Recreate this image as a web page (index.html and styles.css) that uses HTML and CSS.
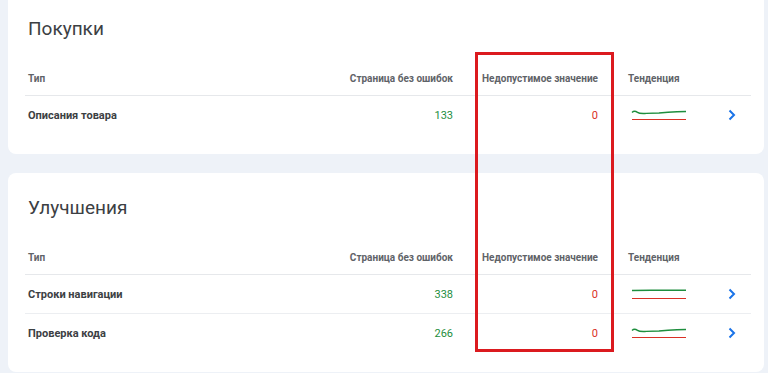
FILE: index.html
```html
<!DOCTYPE html>
<html lang="ru">
<head>
    <meta charset="UTF-8">
    <meta name="viewport" content="width=device-width, initial-scale=1.0">
    <title>Расширенные результаты</title>
    <link rel="stylesheet" href="styles.css">
</head>
<body>
    <div class="page">
        <section class="card card--clipped">
            <h2 class="card-title">Покупки</h2>
            <div class="report">
                <div class="report-row report-head">
                    <div class="cell">Тип</div>
                    <div class="cell num">Страница без ошибок</div>
                    <div class="cell num">Недопустимое значение</div>
                    <div class="cell trend">Тенденция</div>
                    <div class="cell"></div>
                </div>
                <div class="report-row">
                    <div class="cell label">Описания товара</div>
                    <div class="cell num good">133</div>
                    <div class="cell num bad">0</div>
                    <div class="cell trend">
                        <svg class="spark" width="56" height="12" viewBox="0 0 56 12">
                            <path d="M1 3.4 C2.5 2 4.5 2 6.5 3.4 C8.5 4.8 10.5 4.6 15 4.4 L28 4 C34 3.4 40 3 46 2.8 L55 2.5" stroke="#1e8e3e" stroke-width="1.4" fill="none"/>
                            <path d="M1 10.5 L55 10.5" stroke="#d93025" stroke-width="1.2"/>
                        </svg>
                    </div>
                    <div class="cell go">
                        <svg width="8" height="12" viewBox="0 0 8 12"><path d="M1.5 1.5 L6 6 L1.5 10.5" stroke="#1a73e8" stroke-width="2" fill="none"/></svg>
                    </div>
                </div>
            </div>
        </section>

        <section class="card">
            <h2 class="card-title">Улучшения</h2>
            <div class="report">
                <div class="report-row report-head">
                    <div class="cell">Тип</div>
                    <div class="cell num">Страница без ошибок</div>
                    <div class="cell num">Недопустимое значение</div>
                    <div class="cell trend">Тенденция</div>
                    <div class="cell"></div>
                </div>
                <div class="report-row">
                    <div class="cell label">Строки навигации</div>
                    <div class="cell num good">338</div>
                    <div class="cell num bad">0</div>
                    <div class="cell trend">
                        <svg class="spark" width="56" height="12" viewBox="0 0 56 12">
                            <path d="M1 2.5 L20 2.3 L40 2.2 L55 2.2" stroke="#1e8e3e" stroke-width="1.4" fill="none"/>
                            <path d="M1 10.5 L55 10.5" stroke="#d93025" stroke-width="1.2"/>
                        </svg>
                    </div>
                    <div class="cell go">
                        <svg width="8" height="12" viewBox="0 0 8 12"><path d="M1.5 1.5 L6 6 L1.5 10.5" stroke="#1a73e8" stroke-width="2" fill="none"/></svg>
                    </div>
                </div>
                <div class="report-row">
                    <div class="cell label">Проверка кода</div>
                    <div class="cell num good">266</div>
                    <div class="cell num bad">0</div>
                    <div class="cell trend">
                        <svg class="spark" width="56" height="12" viewBox="0 0 56 12">
                            <path d="M1 3.4 C2.5 2 4.5 2 6.5 3.4 C8.5 4.8 10.5 4.6 15 4.4 L28 4 C34 3.4 40 3 46 2.8 L55 2.5" stroke="#1e8e3e" stroke-width="1.4" fill="none"/>
                            <path d="M1 10.5 L55 10.5" stroke="#d93025" stroke-width="1.2"/>
                        </svg>
                    </div>
                    <div class="cell go">
                        <svg width="8" height="12" viewBox="0 0 8 12"><path d="M1.5 1.5 L6 6 L1.5 10.5" stroke="#1a73e8" stroke-width="2" fill="none"/></svg>
                    </div>
                </div>
            </div>
        </section>

        <!-- highlight drawn over the "invalid value" column -->
        <div class="highlight"></div>
    </div>
</body>
</html>
```

FILE: styles.css
```css
body {
    margin: 0;
    background-color: #eef2f8;
    font-family: Roboto, "Noto Sans", sans-serif;
    color: #3c4043;
}
.page {
    position: relative;
    padding: 0 4px 0 8px;
    display: flex;
    flex-direction: column;
    gap: 19px;
}
.card {
    background-color: #fff;
    border-radius: 8px;
    padding: 21px 13px 20px 17px;
}
.card--clipped {
    border-top-left-radius: 0;
    border-top-right-radius: 0;
    padding-top: 15px;
}
.card-title {
    margin: 0 0 18px 3px;
    font-size: 19px;
    line-height: 28px;
    font-weight: 400;
    color: #3c4043;
}
.report-row {
    display: grid;
    grid-template-columns: 1fr 125px 145px 102px 51px;
    align-items: center;
    height: 38px;
    border-top: 1px solid #eceef1;
    font-size: 11px;
}
.report-head {
    height: 34px;
    border-top: none;
    border-bottom: 1px solid #e6e8eb;
    color: #5f6368;
    font-size: 10px;
    font-weight: 700;
}
.report-head + .report-row {
    border-top: none;
}
.cell {
    padding-left: 3px;
    white-space: nowrap;
}
.num {
    text-align: right;
    padding-left: 0;
}
.trend {
    padding-left: 30px;
    display: flex;
    align-items: center;
}
.report-head .trend {
    display: block;
}
.label {
    font-weight: 700;
    color: #3c4043;
}
.good {
    color: #1e8e3e;
}
.bad {
    color: #d93025;
}
.spark {
    display: block;
    margin-left: 3px;
}
.go {
    display: flex;
    justify-content: flex-end;
    padding-right: 15px;
}
.go svg {
    display: block;
}
.highlight {
    position: absolute;
    left: 475px;
    top: 52px;
    width: 133px;
    height: 294px;
    border: 3px solid #db1a1f;
}
```
